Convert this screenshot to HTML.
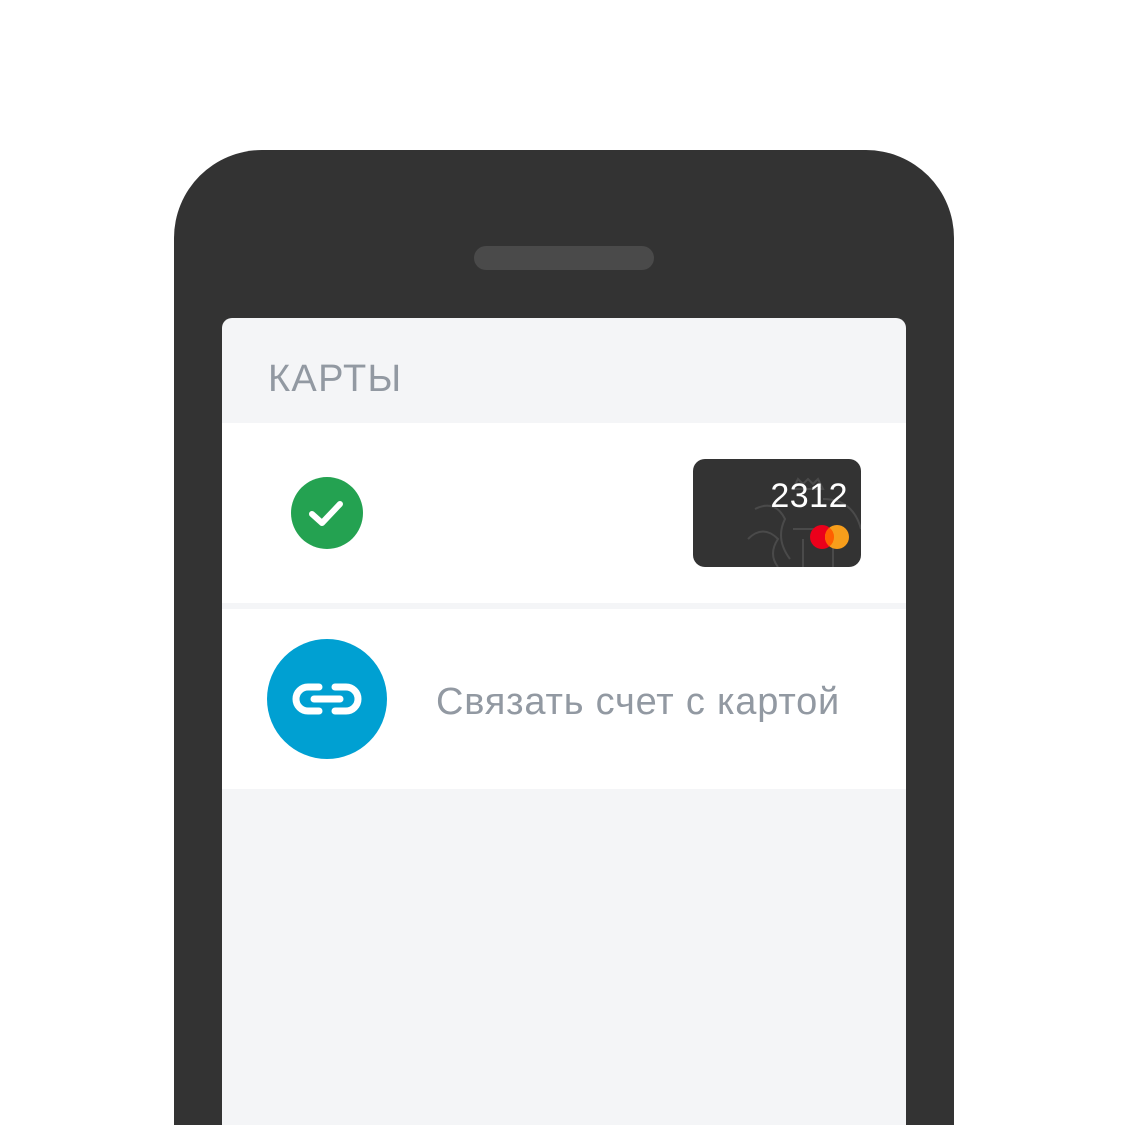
<!DOCTYPE html>
<html style="width:1125px;height:1125px;overflow:hidden"><head><meta charset="utf-8"><style>
body{margin:0;width:1125px;height:1125px;background:#fff;position:relative;overflow:hidden;font-family:"Liberation Sans",sans-serif}
.phone{position:absolute;left:174px;top:150px;width:780px;height:975px;background:#333;border-radius:88px 88px 0 0}
.spk{position:absolute;left:474px;top:246px;width:180px;height:24px;border-radius:12px;background:#4a4a4a}
.screen{position:absolute;left:222px;top:318px;width:684px;height:807px;background:#f4f5f7;border-radius:10px 10px 0 0;overflow:hidden}
.hdr{position:absolute;left:46px;top:40px;font-size:38px;color:#9299a2;letter-spacing:1.3px}
.row{position:absolute;left:0;width:684px;height:180px;background:#fff}
</style></head><body>
<div class="phone"></div><div class="spk"></div>
<div class="screen">
<div class="hdr">КАРТЫ</div>
<div class="row" style="top:105px">
 <svg style="position:absolute;left:69px;top:54px" width="72" height="72" viewBox="0 0 72 72"><circle cx="36" cy="36" r="36" fill="#24a251"/><path d="M21 37 L31 46 L49 27" stroke="#fff" stroke-width="6" fill="none" stroke-linecap="round" stroke-linejoin="round"/></svg>
 <div style="position:absolute;left:471px;top:36px;width:168px;height:108px;background:#333;border-radius:12px;overflow:hidden">
  <svg style="position:absolute;left:0;top:0" width="168" height="108" viewBox="0 0 168 108" fill="none" stroke="#4a4a4a" stroke-width="2"><path d="M62 50 q20-10 30 10 q-10 20 5 40 M100 30 l5-10 l5 5 l5-5 l5 5 l5-5 l5 10 z M100 70 h40 v40 M110 80 v30 M130 40 q30 0 38 30 M55 80 q15-15 30 0 q-10 15 0 28"/></svg>
  <div style="position:absolute;right:13px;top:18px;color:#fff;font-size:34px;letter-spacing:0.5px">2312</div>
  <svg style="position:absolute;left:116px;top:65px" width="42" height="26"><circle cx="13" cy="13" r="12" fill="#eb001b"/><circle cx="28" cy="13" r="12" fill="#f79e1b"/><path d="M20.5 3.6 a12 12 0 0 1 0 18.8 a12 12 0 0 1 0-18.8z" fill="#ff5f00"/></svg>
 </div>
</div>
<div class="row" style="top:291px">
 <svg style="position:absolute;left:45px;top:30px" width="120" height="120" viewBox="0 0 120 120"><circle cx="60" cy="60" r="60" fill="#00a0d2"/><g stroke="#fff" stroke-width="7" fill="none" stroke-linecap="round"><path d="M52 48 h-11 a12 12 0 0 0 0 24 h11"/><path d="M68 48 h11 a12 12 0 0 1 0 24 h-11"/><path d="M47 60 h26"/></g></svg>
 <div style="position:absolute;left:214px;top:72px;font-size:38px;color:#9299a2;letter-spacing:0.8px">Связать счет с картой</div>
</div>
</div>
</body></html>
